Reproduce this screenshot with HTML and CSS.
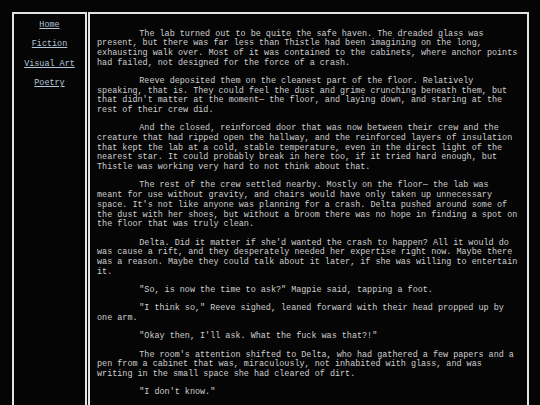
FILE: index.html
```html
<!DOCTYPE html>
<html lang="en">
<head>
<meta charset="utf-8">
<title>Story</title>
<link rel="stylesheet" href="styles.css">
</head>
<body>
<div class="layout">
  <nav class="sidebar">
    <a href="#">Home</a>
    <a href="#">Fiction</a>
    <a href="#">Visual Art</a>
    <a href="#">Poetry</a>
  </nav>
  <main class="story">
    <p>The lab turned out to be quite the safe haven. The dreaded glass was present, but there was far less than Thistle had been imagining on the long, exhausting walk over. Most of it was contained to the cabinets, where anchor points had failed, not designed for the force of a crash.</p>
    <p>Reeve deposited them on the cleanest part of the floor. Relatively speaking, that is. They could feel the dust and grime crunching beneath them, but that didn't matter at the moment— the floor, and laying down, and staring at the rest of their crew did.</p>
    <p>And the closed, reinforced door that was now between their crew and the creature that had ripped open the hallway, and the reinforced layers of insulation that kept the lab at a cold, stable temperature, even in the direct light of the nearest star. It could probably break in here too, if it tried hard enough, but Thistle was working very hard to not think about that.</p>
    <p>The rest of the crew settled nearby. Mostly on the floor— the lab was meant for use without gravity, and chairs would have only taken up unnecessary space. It's not like anyone was planning for a crash. Delta pushed around some of the dust with her shoes, but without a broom there was no hope in finding a spot on the floor that was truly clean.</p>
    <p>Delta. Did it matter if she'd wanted the crash to happen? All it would do was cause a rift, and they desperately needed her expertise right now. Maybe there was a reason. Maybe they could talk about it later, if she was willing to entertain it.</p>
    <p>"So, is now the time to ask?" Magpie said, tapping a foot.</p>
    <p>"I think so," Reeve sighed, leaned forward with their head propped up by one arm.</p>
    <p>"Okay then, I'll ask. What the fuck was that?!"</p>
    <p>The room's attention shifted to Delta, who had gathered a few papers and a pen from a cabinet that was, miraculously, not inhabited with glass, and was writing in the small space she had cleared of dirt.</p>
    <p>"I don't know."</p>
  </main>
</div>
</body>
</html>
```
FILE: styles.css
```css
html, body {
  margin: 0;
  padding: 0;
  background: #050505;
}

body {
  font-family: "Liberation Mono", "Courier New", monospace;
  font-size: 8.45px;
  line-height: 9.67px;
  color: #cfcfcf;
}

.layout {
  display: flex;
  align-items: stretch;
  gap: 1px;
  padding: 12px 11px 0 12px;
  min-height: 430px;
}

.sidebar {
  width: 71px;
  flex: none;
  border: 2px solid #e4e4e4;
  padding-top: 7px;
  display: flex;
  flex-direction: column;
  align-items: center;
  gap: 9.7px;
}

.sidebar a {
  color: #b4c6da;
  text-decoration: underline;
}

.story {
  width: 421.7px;
  flex: none;
  border: 2px solid #e4e4e4;
  padding: 7px 8.3px 7px 7px;
}

.story p {
  margin: 8.7px 0;
  text-indent: 5em;
}
```
